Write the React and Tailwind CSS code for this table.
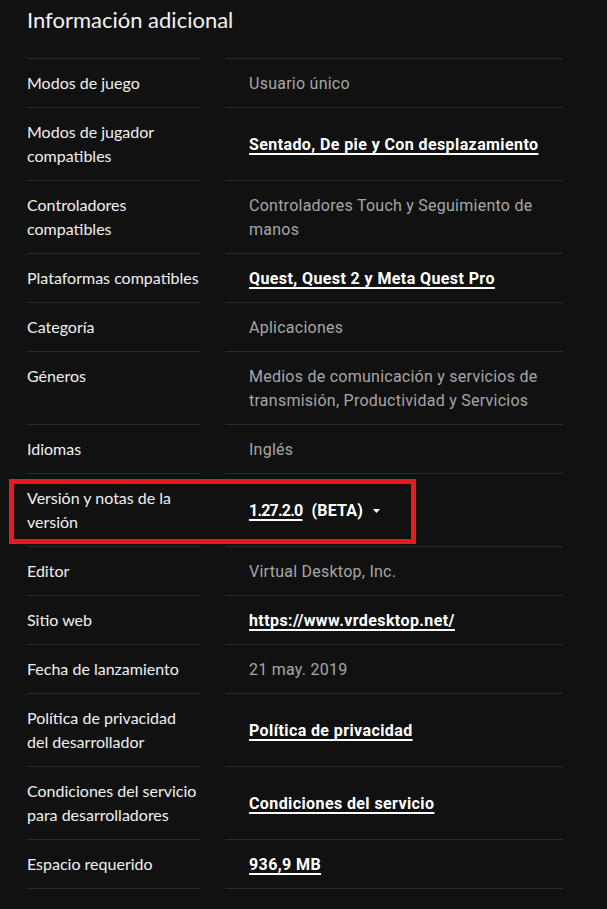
import React from "react";

const rows = [
  { label: "Modos de juego", value: "Usuario único", kind: "text" },
  { label: "Modos de jugador compatibles", value: "Sentado, De pie y Con desplazamiento", kind: "link" },
  { label: "Controladores compatibles", value: "Controladores Touch y Seguimiento de manos", kind: "text" },
  { label: "Plataformas compatibles", value: "Quest, Quest 2 y Meta Quest Pro", kind: "link" },
  { label: "Categoría", value: "Aplicaciones", kind: "text" },
  { label: "Géneros", value: "Medios de comunicación y servicios de transmisión, Productividad y Servicios", kind: "text" },
  { label: "Idiomas", value: "Inglés", kind: "text" },
  { label: "Versión y notas de la versión", value: "1.27.2.0", kind: "version" },
  { label: "Editor", value: "Virtual Desktop, Inc.", kind: "text" },
  { label: "Sitio web", value: "https://www.vrdesktop.net/", kind: "link" },
  { label: "Fecha de lanzamiento", value: "21 may. 2019", kind: "text" },
  { label: "Política de privacidad del desarrollador", value: "Política de privacidad", kind: "link" },
  { label: "Condiciones del servicio para desarrolladores", value: "Condiciones del servicio", kind: "link" },
  { label: "Espacio requerido", value: "936,9 MB", kind: "link" },
];

function Value({ row }) {
  if (row.kind === "text") {
    return <span className="tracking-[0.25px] text-[#a6a6a6]">{row.value}</span>;
  }
  if (row.kind === "link") {
    return (
      <span className="font-bold tracking-[0.4px] text-white underline underline-offset-[3px] decoration-[1.5px]">
        {row.value}
      </span>
    );
  }
  return (
    <span className="flex items-center font-bold text-white">
      <span className="tracking-[-0.8px] underline underline-offset-[3px] decoration-[1.5px]">{row.value}</span>
      <span className="ml-[9px] tracking-[0.2px]">(BETA)</span>
      <svg className="ml-[10px]" width="7" height="4" viewBox="0 0 7 4">
        <path d="M0 0 L7 0 L3.5 4 Z" fill="#ffffff" />
      </svg>
    </span>
  );
}

export default function App() {
  return (
    <div className="relative min-h-[909px] w-[607px] bg-[#111111] pl-[27px] pr-[44px] pt-[5px] font-['Lato',sans-serif]">
      <h2 className="h-[53px] text-[22px] leading-[30px] text-[#f2f2f2]">Información adicional</h2>
      <div>
        {rows.map((row, i) => (
          <div key={i} className="grid grid-cols-[173px_338px] gap-x-[25px]">
            <div className="border-t border-[#2c2c2c] py-3 text-[16px] leading-6 text-[#f0f0f0]">
              {row.label}
            </div>
            <div className="flex items-center border-t border-[#2c2c2c] pt-[13px] pb-[11px] pl-6 pr-2 text-[16px] leading-6 font-['Roboto',sans-serif]">
              <Value row={row} />
            </div>
          </div>
        ))}
        <div className="grid grid-cols-[173px_338px] gap-x-[25px]">
          <div className="border-t border-[#2c2c2c]" />
          <div className="border-t border-[#2c2c2c]" />
        </div>
      </div>
      <div className="absolute left-[9px] top-[479px] h-[65px] w-[407px] border-[5px] border-[#e51b24]" />
    </div>
  );
}
